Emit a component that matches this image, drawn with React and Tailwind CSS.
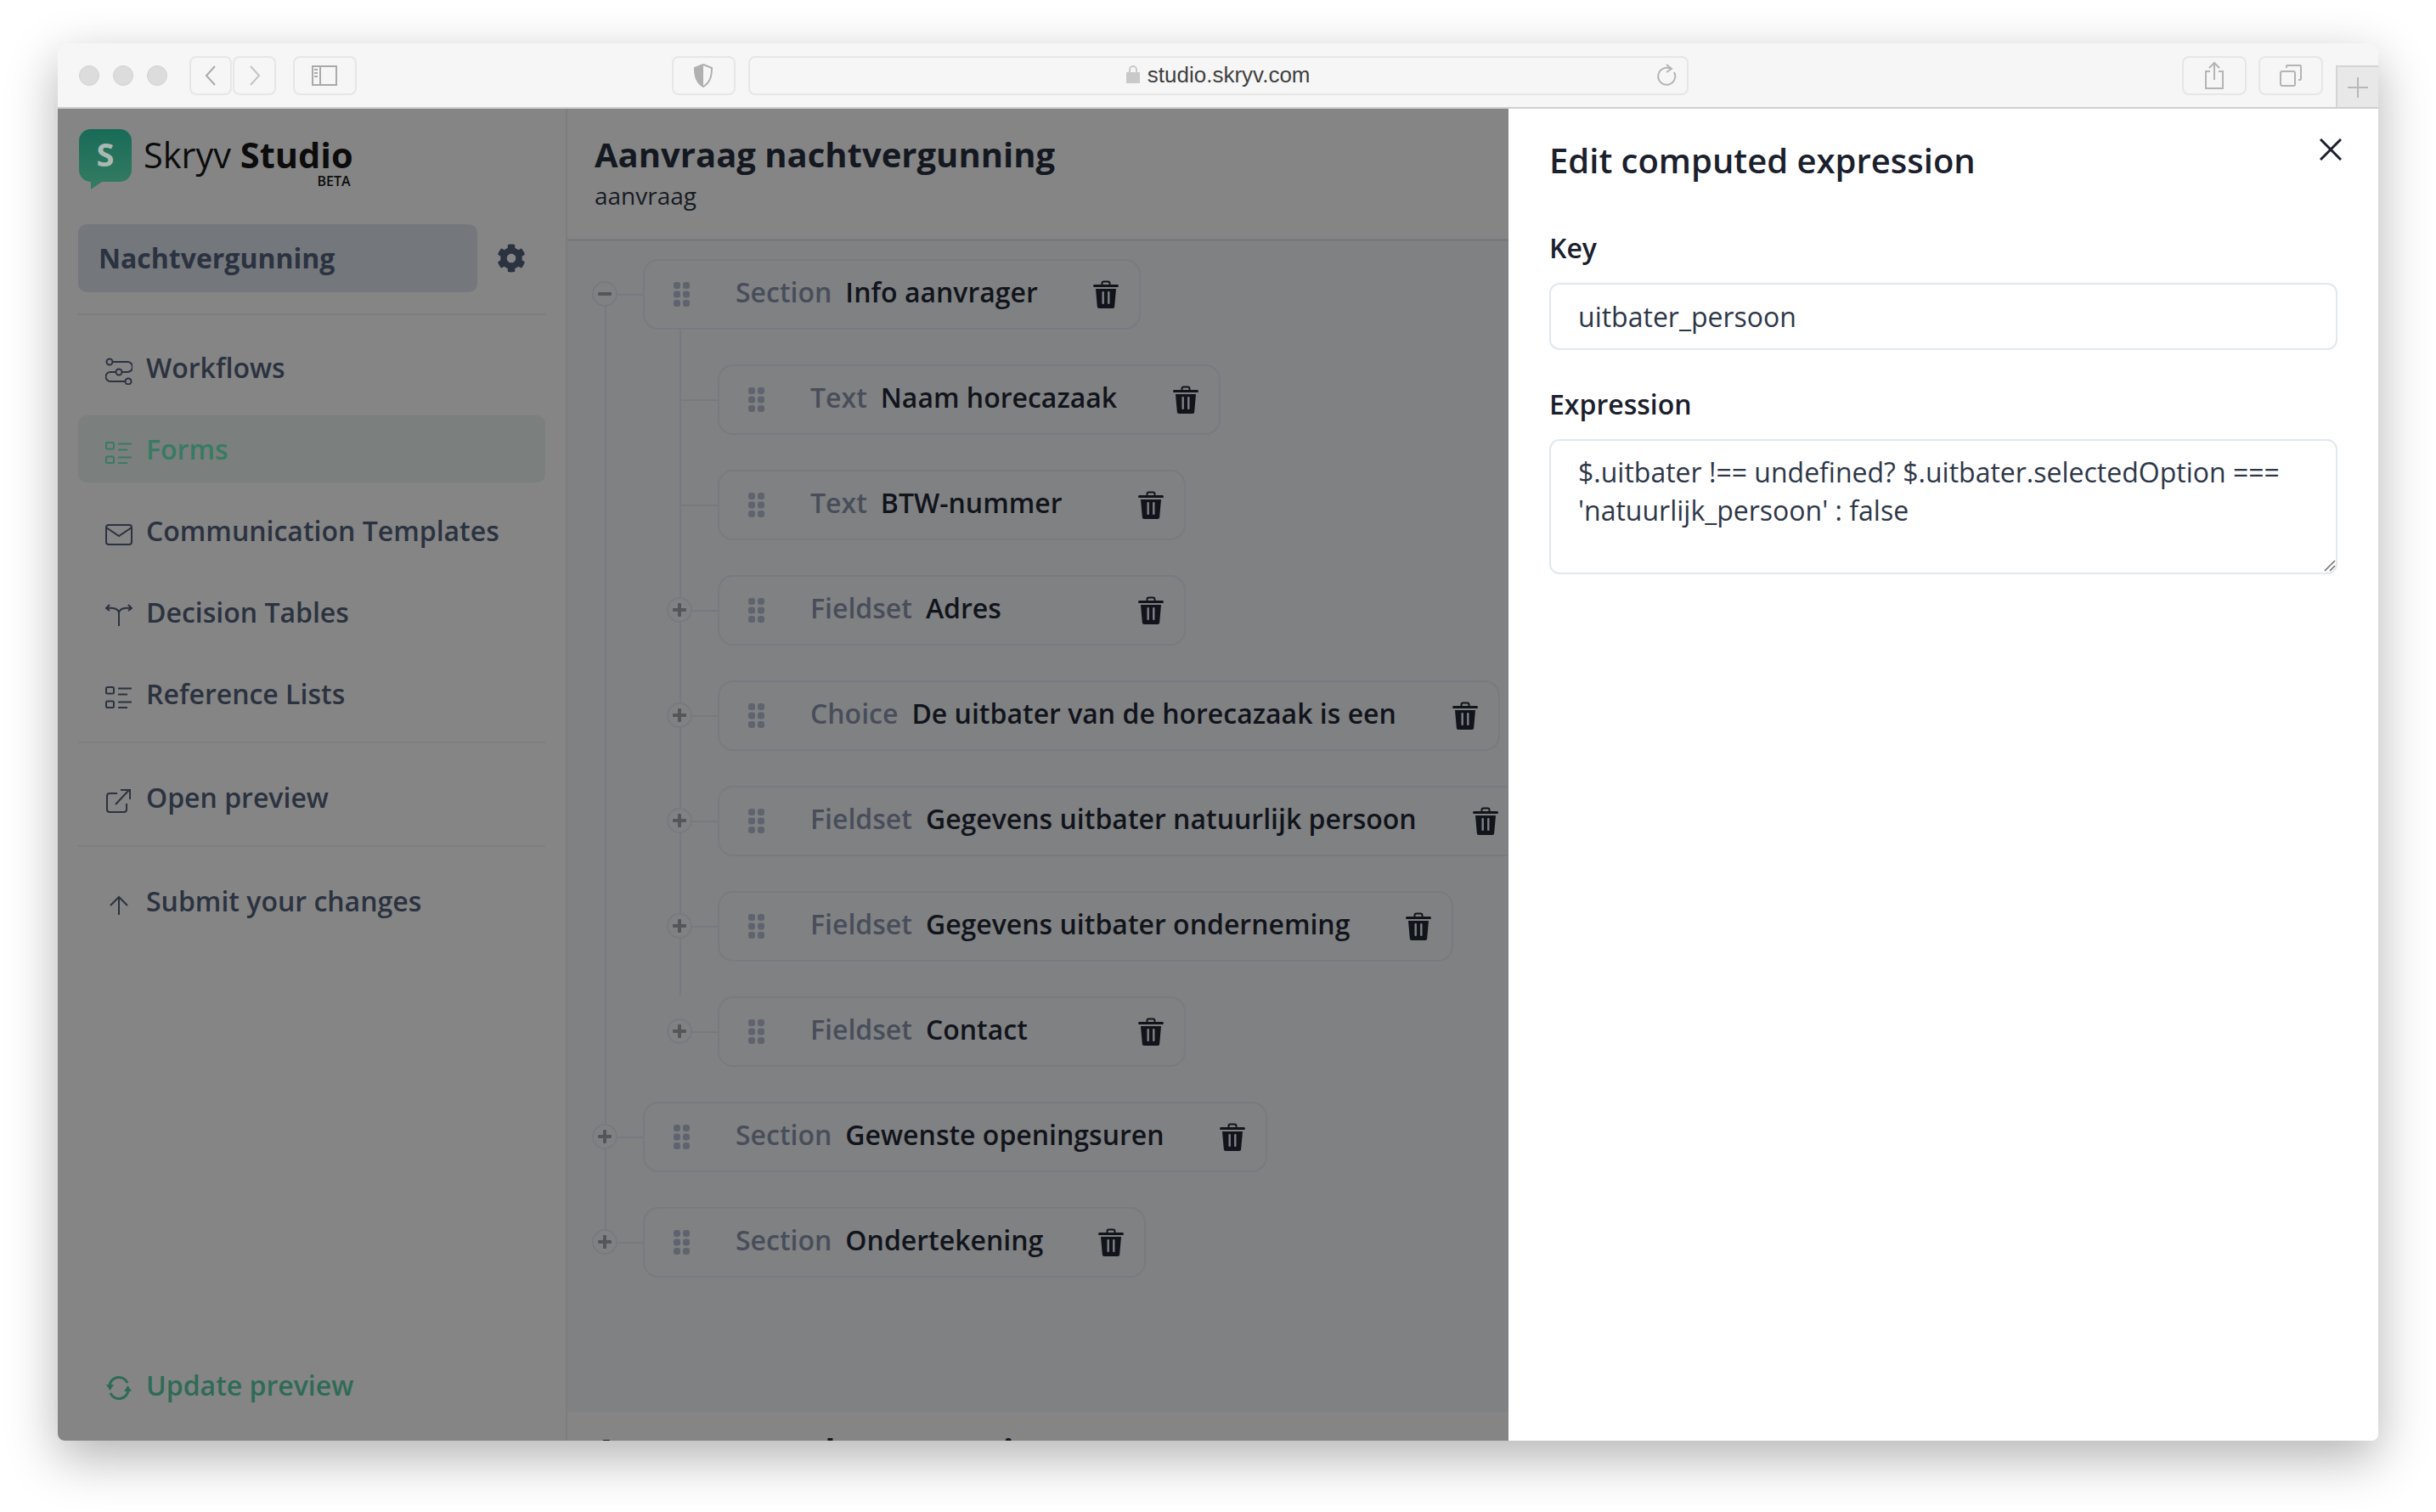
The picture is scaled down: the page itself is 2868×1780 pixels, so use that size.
import React from 'react'
import { FaCog } from 'react-icons/fa'

const font = { fontFamily: '"Open Sans", sans-serif' }

const Trash = () => (
  <svg width="30" height="33" viewBox="0 0 30 33" className="shrink-0 text-[#11141b]">
    <path d="M10.5 5V3.5A2 2 0 0 1 12.5 1.500h5a2 2 0 0 1 2 2V5" fill="none" stroke="currentColor" strokeWidth="2" />
    <rect x="0" y="5" width="30" height="3" rx="1.500" fill="currentColor" />
    <path d="M3 10h24l-1.800 20.500a2.500 2.500 0 0 1-2.500 2.500H7.300a2.500 2.500 0 0 1-2.500-2.500z" fill="currentColor" />
    <rect x="10.500" y="13" width="2.400" height="15" rx="1" fill="#808183" />
    <rect x="17.100" y="13" width="2.400" height="15" rx="1" fill="#808183" />
  </svg>
)

const Grip = () => (
  <svg width="19" height="29" viewBox="0 0 19 29" className="shrink-0 text-[#5d646e]">
    <rect x="0" y="0" width="8" height="8" rx="3" fill="currentColor" />
    <rect x="11" y="0" width="8" height="8" rx="3" fill="currentColor" />
    <rect x="0" y="10.500" width="8" height="8" rx="3" fill="currentColor" />
    <rect x="11" y="10.500" width="8" height="8" rx="3" fill="currentColor" />
    <rect x="0" y="21" width="8" height="8" rx="3" fill="currentColor" />
    <rect x="11" y="21" width="8" height="8" rx="3" fill="currentColor" />
  </svg>
)

const Toggle = ({ open }) => (
  <div className="flex h-[30px] w-[30px] items-center justify-center rounded-full border-2 border-[#767a80] bg-[#808183]">
    <svg width="18" height="18" viewBox="0 0 18 18" className="text-[#55565a]">
      <rect x="1" y="7" width="16" height="4" rx="1" fill="currentColor" />
      {!open && <rect x="7" y="1" width="4" height="16" rx="1" fill="currentColor" />}
    </svg>
  </div>
)

const Row = ({ label, title, width, toggle, open }) => (
  <div className="relative h-[83px]">
    <div className="absolute left-[-44px] top-[41px] h-[2px] w-[44px] bg-[#767a80]" />
    {toggle && (
      <div className="absolute left-[-60px] top-[26px]">
        <Toggle open={open} />
      </div>
    )}
    <div className={`flex h-[83px] items-center rounded-[18px] border-2 border-[#777b81] pl-[34px] ${width}`}>
      <Grip />
      <span className="ml-[54px] mt-[-6px] text-[32px] font-semibold text-[#474e5a]">{label}</span>
      <span className="ml-[16px] mt-[-6px] whitespace-nowrap text-[32px] font-semibold text-[#11141b]">{title}</span>
      <div className="ml-auto pr-[24px]">
        <Trash />
      </div>
    </div>
  </div>
)

const NavIcon = ({ children, color = 'text-[#2b3240]' }) => (
  <svg width="32" height="32" viewBox="0 0 32 32" fill="none" stroke="currentColor" strokeWidth="2" className={`mt-[8px] shrink-0 ${color}`}>
    {children}
  </svg>
)

const ListGlyph = () => (
  <>
    <rect x="1" y="4" width="9" height="7.500" rx="1.500" />
    <rect x="1" y="20.500" width="9" height="7.500" rx="1.500" />
    <path d="M15 5.500h16M15 12.500h11M15 21.500h16M15 28h11" />
  </>
)

const NavItem = ({ icon, label, active }) => (
  <div className={`flex h-[79px] items-center gap-[16px] rounded-[10px] pl-[32px] ${active ? 'bg-[#7b7f7e] text-[#377b62]' : 'text-[#2b3240]'}`}>
    {icon}
    <span className="text-[32px] font-semibold">{label}</span>
  </div>
)

const ToolBtn = ({ className = 'w-[75px]', children }) => (
  <div className={`flex h-[46px] items-center justify-center rounded-[8px] border-2 border-[#e6e6e6] ${className}`}>
    {children}
  </div>
)

const Toolbar = () => (
  <div className="relative flex h-[77px] shrink-0 items-center border-b-2 border-[#cfcfcf] bg-[#f6f6f6] pl-[25px] text-[#b4b4b4]">
    <div className="flex gap-[16px]">
      <div className="h-[24px] w-[24px] rounded-full border border-[#d2d2d2] bg-[#dcdcdc]" />
      <div className="h-[24px] w-[24px] rounded-full border border-[#d2d2d2] bg-[#dcdcdc]" />
      <div className="h-[24px] w-[24px] rounded-full border border-[#d2d2d2] bg-[#dcdcdc]" />
    </div>
    <div className="ml-[26px] flex gap-px">
      <ToolBtn className="w-[50px]">
        <svg width="16" height="26" viewBox="0 0 16 26" fill="none" stroke="#aaaaaa" strokeWidth="2"><path d="M13 2L3 13l10 11" /></svg>
      </ToolBtn>
      <ToolBtn className="w-[51px]">
        <svg width="16" height="26" viewBox="0 0 16 26" fill="none" stroke="#c4c4c4" strokeWidth="2"><path d="M3 2l10 11L3 24" /></svg>
      </ToolBtn>
    </div>
    <ToolBtn className="ml-[20px] w-[75px]">
      <svg width="30" height="24" viewBox="0 0 30 24" fill="none" stroke="#aaaaaa" strokeWidth="2">
        <rect x="1" y="1" width="28" height="22" />
        <path d="M10 1v22" />
        <path d="M3 5h4M3 9h4M3 13h4" />
      </svg>
    </ToolBtn>
    <ToolBtn className="ml-[371px] w-[75px]">
      <svg width="24" height="28" viewBox="0 0 24 28">
        <path d="M12 1l10 4c0 10-2 17-10 22C4 22 2 15 2 5z" fill="none" stroke="#b0b0b0" strokeWidth="2" />
        <path d="M12 1C7 3 2 5 2 5c0 10 2 17 10 22z" fill="#b0b0b0" />
      </svg>
    </ToolBtn>
    <div className="ml-[15px] flex h-[46px] w-[1108px] items-center rounded-[8px] border-2 border-[#e6e6e6] pl-[443px] pr-[10px]">
      <svg width="16" height="21" viewBox="0 0 16 21" className="mt-[-2px] shrink-0">
        <path d="M4 9V5a4 4 0 0 1 8 0v4" fill="none" stroke="#c9c9c9" strokeWidth="2" />
        <rect x="0" y="8" width="16" height="13" fill="#c9c9c9" />
      </svg>
      <span className="ml-[9px] text-[26px] text-[#3f3f3f]" style={{ fontFamily: '"Liberation Sans", sans-serif' }}>studio.skryv.com</span>
      <svg width="26" height="28" viewBox="0 0 26 28" fill="none" stroke="#b4b4b4" strokeWidth="2" className="ml-auto">
        <path d="M21 10a10 10 0 1 1-4-4" />
        <path d="M12 1l6 5-6 4" />
      </svg>
    </div>
    <ToolBtn className="ml-[581px] w-[76px]">
      <svg width="24" height="34" viewBox="0 0 24 34" fill="none" stroke="#b4b4b4" strokeWidth="2">
        <path d="M7 12H2v20h20V12h-5" />
        <path d="M12 22V2M6 8l6-6 6 6" />
      </svg>
    </ToolBtn>
    <ToolBtn className="ml-[14px] w-[76px]">
      <svg width="26" height="26" viewBox="0 0 26 26" fill="none" stroke="#b4b4b4" strokeWidth="2">
        <rect x="1" y="8" width="17" height="17" rx="2" />
        <path d="M8 4V2a1 1 0 0 1 1-1h15a1 1 0 0 1 1 1v15a1 1 0 0 1-1 1h-2" />
      </svg>
    </ToolBtn>
    <div className="ml-[15px] flex h-[49px] w-[50px] items-center justify-center self-end border-l-2 border-t-2 border-[#d4d4d4] bg-[#e8e8e8]">
      <svg width="24" height="24" viewBox="0 0 24 24" stroke="#b8b8b8" strokeWidth="2"><path d="M12 0v24M0 12h24" /></svg>
    </div>
  </div>
)

const Logo = () => (
  <div className="flex items-start gap-[14px] pl-[25px] pt-[24px]">
    <svg width="62" height="71" viewBox="0 0 62 71" className="shrink-0">
      <defs>
        <linearGradient id="logo" x1="0" y1="0" x2="0" y2="1">
          <stop offset="0%" stopColor="#186b57" />
          <stop offset="100%" stopColor="#367c63" />
        </linearGradient>
      </defs>
      <path d="M14 0h34a14 14 0 0 1 14 14v34a14 14 0 0 1-14 14H27L14 71v-9a14 14 0 0 1-14-14V14A14 14 0 0 1 14 0z" fill="url(#logo)" />
      <text x="31" y="44" textAnchor="middle" fontSize="38" fontWeight="700" fill="#a9b8b2" style={font}>S</text>
    </svg>
    <div className="flex flex-col items-end pt-[8px] text-[#0c0c0c]">
      <div className="text-[41.500px] leading-[44px]">
        Skryv <span className="font-bold">Studio</span>
      </div>
      <div className="pr-[3px] text-[16px] font-semibold leading-[18px]">BETA</div>
    </div>
  </div>
)

const Sidebar = () => (
  <div className="flex w-[600px] shrink-0 flex-col border-r-2 border-[#7c7d7e] bg-[#858585]">
    <Logo />
    <div className="mt-[41px] flex items-center pl-[24px]">
      <div className="flex h-[80px] w-[470px] items-center rounded-[10px] bg-[#74777b] pl-[24px] text-[32px] font-bold text-[#2b3240]">
        Nachtvergunning
      </div>
      <FaCog className="ml-[23px] h-[34px] w-[34px] text-[#2b3240]" />
    </div>
    <div className="mx-[24px] mt-[25px] border-t-2 border-[#7b7c7e]" />
    <nav className="mx-[24px] mt-[22px] flex flex-col gap-[17px]">
      <NavItem label="Workflows" icon={
        <NavIcon>
          <circle cx="5" cy="5" r="3.500" />
          <circle cx="16" cy="17" r="3.500" />
          <circle cx="27" cy="28" r="3.500" />
          <path d="M9 5h17a6 6 0 0 1 0 12h-6M12 17H6a5.500 5.500 0 0 0 0 11h17" />
        </NavIcon>
      } />
      <NavItem active label="Forms" icon={<NavIcon color="text-[#377b62]"><ListGlyph /></NavIcon>} />
      <NavItem label="Communication Templates" icon={
        <NavIcon>
          <rect x="1" y="5" width="30" height="23" rx="3" />
          <path d="M1 8l15 10L31 8" />
        </NavIcon>
      } />
      <NavItem label="Decision Tables" icon={
        <NavIcon>
          <path d="M16 28V13C16 8 10 6 2 7M16 13c0-5 6-7 14-6M5 3L1 7l4 3M27 3l4 4-4 3" />
        </NavIcon>
      } />
      <NavItem label="Reference Lists" icon={<NavIcon><ListGlyph /></NavIcon>} />
    </nav>
    <div className="mx-[24px] mt-[17px] border-t-2 border-[#7d7e7f]" />
    <div className="mx-[24px] mt-[24px]">
      <NavItem label="Open preview" icon={
        <NavIcon>
          <path d="M14 7H5a3 3 0 0 0-3 3v16a3 3 0 0 0 3 3h17a3 3 0 0 0 3-3v-7" />
          <path d="M12 20L28 3M18 3h11v11" />
        </NavIcon>
      } />
    </div>
    <div className="mx-[24px] mt-[17px] border-t-2 border-[#7d7e7f]" />
    <div className="mx-[24px] mt-[24px]">
      <NavItem label="Submit your changes" icon={
        <NavIcon>
          <path d="M16 28V8M6 17l10-10 10 10" />
        </NavIcon>
      } />
    </div>
    <div className="mx-[24px] mb-[26px] mt-auto flex h-[79px] items-center gap-[16px] pl-[32px] text-[32px] font-semibold text-[#2e6b56]">
      <svg width="32" height="32" viewBox="0 0 32 32" className="mt-[6px] shrink-0">
        <path d="M5 13A11 11 0 0 1 26 10M27 19A11 11 0 0 1 6 22" fill="none" stroke="currentColor" strokeWidth="3" />
        <path d="M1 12h9l-4.500 7zM31 20h-9l4.500-7z" fill="currentColor" />
      </svg>
      Update preview
    </div>
  </div>
)

const Main = () => (
  <div className="flex min-w-0 flex-1 flex-col overflow-hidden bg-[#858585]">
    <div className="h-[156px] shrink-0 border-b-[3px] border-[#76797e] pl-[32px] pt-[27px]">
      <div className="text-[40px] font-bold leading-[54px] text-[#141821]">Aanvraag nachtvergunning</div>
      <div className="text-[28px] leading-[42px] text-[#171b24]">aanvraag</div>
    </div>
    <div className="relative h-[1378px] shrink-0 bg-[#808183] pl-[89px] pt-[21px]">
      <div className="absolute left-[44px] top-[62px] h-[1118px] w-[2px] bg-[#767a80]" />
      <div className="flex flex-col gap-[41px]">
        <div>
          <Row label="Section" title="Info aanvrager" width="w-[586px]" toggle open />
          <div className="relative ml-[88px] mt-[41px] flex flex-col gap-[41px]">
            <div className="absolute left-[-45px] top-[-41px] h-[785px] w-[2px] bg-[#767a80]" />
            <Row label="Text" title="Naam horecazaak" width="w-[592px]" />
            <Row label="Text" title="BTW-nummer" width="w-[551px]" />
            <Row label="Fieldset" title="Adres" width="w-[551px]" toggle />
            <Row label="Choice" title="De uitbater van de horecazaak is een" width="w-[921px]" toggle />
            <Row label="Fieldset" title="Gegevens uitbater natuurlijk persoon" width="w-[945px]" toggle />
            <Row label="Fieldset" title="Gegevens uitbater onderneming" width="w-[866px]" toggle />
            <Row label="Fieldset" title="Contact" width="w-[551px]" toggle />
          </div>
        </div>
        <Row label="Section" title="Gewenste openingsuren" width="w-[735px]" toggle />
        <Row label="Section" title="Ondertekening" width="w-[592px]" toggle />
      </div>
    </div>
    <div className="pl-[32px] pt-[18px] text-[40px] font-bold leading-[56px] text-[#141821]">Aanvraag nachtvergunning</div>
  </div>
)

const Panel = () => (
  <div className="relative flex w-[1024px] shrink-0 flex-col bg-white px-[48px] pt-[29px] text-[#1a202c]">
    <svg width="26" height="26" viewBox="0 0 26 26" stroke="#1a202c" strokeWidth="3" className="absolute right-[43px] top-[35px]">
      <path d="M1 1l24 24M25 1L1 25" />
    </svg>
    <div className="text-[40px] font-semibold leading-[64px]">Edit computed expression</div>
    <label className="mt-[49px] block text-[32px] font-semibold leading-[44px]">Key</label>
    <input readOnly value="uitbater_persoon" className="mt-[19px] h-[79px] w-full rounded-[12px] border-2 border-[#e2e8f0] bg-white px-[32px] text-[32px] text-[#2d3748] outline-none" />
    <label className="mt-[42px] block text-[32px] font-semibold leading-[44px]">Expression</label>
    <div className="relative mt-[19px]">
      <textarea
        readOnly
        defaultValue="$.uitbater !== undefined? $.uitbater.selectedOption === 'natuurlijk_persoon' : false"
        className="block h-[159px] w-full resize-none rounded-[12px] border-2 border-[#e2e8f0] bg-white px-[32px] py-[15px] text-[32px] leading-[44.500px] text-[#2d3748] outline-none"
      />
      <svg width="14" height="14" viewBox="0 0 14 14" stroke="#6b6b6b" strokeWidth="1.500" className="absolute bottom-[3px] right-[2px]">
        <path d="M1 13L13 1M7 13l6-6" />
      </svg>
    </div>
  </div>
)

const App = () => (
  <div className="h-[1780px] w-[2868px] overflow-hidden bg-white pl-[68px] pt-[51px]" style={font}>
    <div className="flex h-[1645px] w-[2732px] flex-col overflow-hidden rounded-t-[14px] rounded-b-[8px] shadow-[0_20px_60px_rgba(0,0,0,0.3)]">
      <Toolbar />
      <div className="flex min-h-0 flex-1">
        <Sidebar />
        <Main />
        <Panel />
      </div>
    </div>
  </div>
)

export default App
